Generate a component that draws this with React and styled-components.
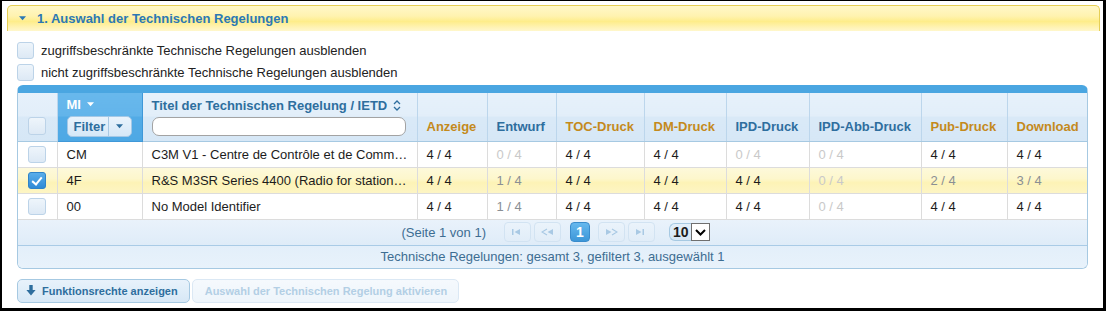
import React from "react"
import styled, { createGlobalStyle } from "styled-components"

const GlobalStyle = createGlobalStyle`
  html, body { margin: 0; padding: 0; background: #fff; }
  body { font-family: "Liberation Sans", Arial, sans-serif; font-size: 13px; color: #222; }
  * { box-sizing: border-box; }
`

const columns = [
    { key: 'cb', width: 39 },
    { key: 'mi', width: 85 },
    { key: 'title', width: 275 },
    { key: 'anzeige', label: 'Anzeige', tone: 'gold', width: 70 },
    { key: 'entwurf', label: 'Entwurf', tone: 'blue', width: 69 },
    { key: 'toc', label: 'TOC-Druck', tone: 'gold', width: 88 },
    { key: 'dm', label: 'DM-Druck', tone: 'gold', width: 82 },
    { key: 'ipd', label: 'IPD-Druck', tone: 'blue', width: 83 },
    { key: 'ipdabb', label: 'IPD-Abb-Druck', tone: 'blue', width: 112 },
    { key: 'pub', label: 'Pub-Druck', tone: 'gold', width: 86 },
    { key: 'download', label: 'Download', tone: 'gold', width: 80 },
]

// each value: [text, tone]  tone: n = normal, l = light grey, m = mid grey
const rows = [
    { mi: 'CM', title: 'C3M V1 - Centre de Contrôle et de Comm…', selected: false,
      values: [['4 / 4', 'n'], ['0 / 4', 'l'], ['4 / 4', 'n'], ['4 / 4', 'n'], ['0 / 4', 'l'], ['0 / 4', 'l'], ['4 / 4', 'n'], ['4 / 4', 'n']] },
    { mi: '4F', title: 'R&S M3SR Series 4400 (Radio for station…', selected: true,
      values: [['4 / 4', 'n'], ['1 / 4', 'm'], ['4 / 4', 'n'], ['4 / 4', 'n'], ['4 / 4', 'n'], ['0 / 4', 'l'], ['2 / 4', 'm'], ['3 / 4', 'm']] },
    { mi: '00', title: 'No Model Identifier', selected: false,
      values: [['4 / 4', 'n'], ['1 / 4', 'm'], ['4 / 4', 'n'], ['4 / 4', 'n'], ['4 / 4', 'n'], ['0 / 4', 'l'], ['4 / 4', 'n'], ['4 / 4', 'n']] },
]

const toneColor = { n: '#1c1c1c', l: '#c9c9c9', m: '#8a8f94' }

function Tri({ color = '#fff', size = 7 }) {
    return (
        <svg width={size} height={Math.ceil(size / 2) + 1} viewBox="0 0 8 5">
            <path d="M0 0 L8 0 L4 4.5 Z" fill={color} />
        </svg>
    )
}

function SortIcon() {
    return (
        <svg width="8" height="11" viewBox="0 0 8 11">
            <path d="M1 4 L4 1 L7 4 M1 7 L4 10 L7 7" fill="none" stroke="#2e6e9e" strokeWidth="1.3" />
        </svg>
    )
}

function PagerIcon({ kind }) {
    const c = '#a9c9e4'
    const shapes = {
        first: <><rect x="1" y="1" width="1.5" height="6" fill={c} /><path d="M9 1 L3.5 4 L9 7 Z" fill={c} /></>,
        prev: <><path d="M6 1 L1 4 L6 7" fill="none" stroke={c} strokeWidth="1.2" /><path d="M12 1 L6.5 4 L12 7 Z" fill={c} /></>,
        next: <><path d="M1 1 L6.5 4 L1 7 Z" fill={c} /><path d="M7 1 L12 4 L7 7" fill="none" stroke={c} strokeWidth="1.2" /></>,
        last: <><path d="M1 1 L6.5 4 L1 7 Z" fill={c} /><rect x="7.5" y="1" width="1.5" height="6" fill={c} /></>,
    }
    return <svg width="13" height="8" viewBox="0 0 13 8">{shapes[kind]}</svg>
}

export default function App() {
    return (
        <Frame>
            <GlobalStyle />
            <SectionHeader>
                <Tri color="#2b78b4" size={7} />
                <span>1. Auswahl der Technischen Regelungen</span>
            </SectionHeader>
            <Body>
                <Checks>
                    <CheckRow><Box /><span>zugriffsbeschränkte Technische Regelungen ausblenden</span></CheckRow>
                    <CheckRow><Box /><span>nicht zugriffsbeschränkte Technische Regelungen ausblenden</span></CheckRow>
                </Checks>

                <TableBox>
                    <Grid>
                        <colgroup>
                            {columns.map(c => <col key={c.key} style={{ width: c.width }} />)}
                        </colgroup>
                        <thead>
                            <tr>
                                <Head $align="center"><HeadBox><Box /></HeadBox></Head>
                                <Head $active>
                                    <MiTitle>MI <Tri color="#fff" size={7} /></MiTitle>
                                    <FilterButton>
                                        <span className="label">Filter</span>
                                        <span className="drop"><Tri color="#2e6e9e" size={7} /></span>
                                    </FilterButton>
                                </Head>
                                <Head>
                                    <TitleLabel>Titel der Technischen Regelung / IETD <SortIcon /></TitleLabel>
                                    <SearchInput type="text" />
                                </Head>
                                {columns.slice(3).map(c => (
                                    <Head key={c.key} $tone={c.tone}><span>{c.label}</span></Head>
                                ))}
                            </tr>
                        </thead>
                        <tbody>
                            {rows.map(r => (
                                <Row key={r.mi} $selected={r.selected}>
                                    <Cell $align="center"><Box $checked={r.selected} /></Cell>
                                    <Cell>{r.mi}</Cell>
                                    <Cell>{r.title}</Cell>
                                    {r.values.map(([v, t], i) => (
                                        <Cell key={i} $tone={t}>{v}</Cell>
                                    ))}
                                </Row>
                            ))}
                        </tbody>
                    </Grid>
                    <Pager>
                        <span className="info">(Seite 1 von 1)</span>
                        <PageButtons>
                            <PageBtn><PagerIcon kind="first" /></PageBtn>
                            <PageBtn><PagerIcon kind="prev" /></PageBtn>
                        </PageButtons>
                        <PageNumber>1</PageNumber>
                        <PageButtons>
                            <PageBtn><PagerIcon kind="next" /></PageBtn>
                            <PageBtn><PagerIcon kind="last" /></PageBtn>
                        </PageButtons>
                        <PageSize>
                            <span className="num">10</span>
                            <span className="arrow">
                                <svg width="11" height="7" viewBox="0 0 11 7">
                                    <path d="M1 1 L5.5 5.5 L10 1" fill="none" stroke="#000" strokeWidth="2" />
                                </svg>
                            </span>
                        </PageSize>
                    </Pager>
                    <Status>Technische Regelungen: gesamt 3, gefiltert 3, ausgewählt 1</Status>
                </TableBox>

                <Actions>
                    <ActionButton>
                        <svg width="10" height="11" viewBox="0 0 10 11">
                            <path d="M3.3 0 H6.7 V5 H9.6 L5 10.6 L0.4 5 H3.3 Z" fill="#2e6e9e" />
                        </svg>
                        Funktionsrechte anzeigen
                    </ActionButton>
                    <ActionButton $disabled>Auswahl der Technischen Regelung aktivieren</ActionButton>
                </Actions>
            </Body>
        </Frame>
    )
}

const Frame = styled.div`
    width: 1106px;
    height: 311px;
    border: solid #000;
    border-width: 1px 3px 3px 2px;
    padding: 4px 3px 0 5px;
    overflow: hidden;
`

const SectionHeader = styled.div`
    height: 26px;
    display: flex;
    align-items: center;
    gap: 11px;
    padding-left: 11px;
    border: 1px solid #e6cf55;
    border-bottom: none;
    border-radius: 5px 5px 0 0;
    background: linear-gradient(to bottom, #fff8c8 0%, #fff3b0 40%, #feed8a 62%, #fff3b4 85%, #fff7cc 100%);
    color: #2b78b4;
    font-weight: bold;
    font-size: 13px;
`

const Body = styled.div`
    padding: 10px 10px 0 10px;
`

const Checks = styled.div`
    display: flex;
    flex-direction: column;
    gap: 5px;
    padding-top: 1px;
`

const CheckRow = styled.label`
    display: flex;
    align-items: center;
    gap: 7px;
    height: 17px;
    color: #222;
    font-size: 13px;
`

const Box = styled.span`
    width: 17px;
    height: 17px;
    flex: none;
    display: inline-block;
    position: relative;
    border-radius: 3px;
    border: 1px solid ${p => p.$checked ? '#2f83c8' : '#bcd3e8'};
    background: ${p => p.$checked
        ? 'linear-gradient(to bottom, #5aaeea, #2f8ad6)'
        : 'linear-gradient(to bottom, #eef5fb, #dde9f5)'};
    vertical-align: middle;

    ${p => p.$checked ? `
    &::after{
        content: '';
        position: absolute;
        left: 5px;
        top: 2px;
        width: 4px;
        height: 8px;
        border: solid #fff;
        border-width: 0 2px 2px 0;
        transform: rotate(40deg);
    }
    ` : null}
`

const TableBox = styled.div`
    margin-top: 4px;
    width: 1071px;
    border: 1px solid #a6c9e2;
    border-top: 8px solid #4aa6e1;
    border-radius: 6px;
    overflow: hidden;
`

const Grid = styled.table`
    width: 1069px;
    table-layout: fixed;
    border-collapse: collapse;
`

const Head = styled.th`
    height: 48px;
    padding: 0 9px 7px;
    vertical-align: bottom;
    text-align: ${p => p.$align || 'left'};
    font-size: 13px;
    font-weight: bold;
    white-space: nowrap;
    border-right: 1px solid ${p => p.$active ? '#3f98d8' : '#bcd6ec'};
    border-bottom: 1px solid ${p => p.$active ? '#3f98d8' : '#a6c9e2'};
    color: ${p => p.$tone === 'gold' ? '#c48a1c' : '#2e6e9e'};
    background: ${p => p.$active
        ? 'linear-gradient(to bottom, #68b8ec 0%, #62b4ea 48%, #52abe6 50%, #4ea8e4 100%)'
        : 'linear-gradient(to bottom, #e6f1fb 0%, #e2eef9 48%, #d9e9f7 50%, #d6e7f6 100%)'};
    &:last-child{ border-right: none; }
`

const HeadBox = styled.div`
    display: flex;
    justify-content: center;
    margin-bottom: -1px;
    ${Box}{ width: 18px; height: 18px; }
`

const MiTitle = styled.div`
    display: flex;
    align-items: center;
    gap: 6px;
    color: #fff;
    margin-bottom: 4px;
`

const FilterButton = styled.div`
    display: inline-flex;
    width: 65px;
    height: 21px;
    margin-bottom: -3px;
    border: 1px solid #a4c8e6;
    border-radius: 5px;
    background: linear-gradient(to bottom, #e9f3fc, #d6e8f7);
    color: #2e6e9e;
    font-size: 13px;
    font-weight: bold;
    overflow: hidden;

    .label{
        flex: 1;
        display: flex;
        align-items: center;
        padding-left: 6px;
        border-right: 1px solid #a9c9e4;
    }
    .drop{
        width: 22px;
        display: flex;
        align-items: center;
        justify-content: center;
    }
`

const TitleLabel = styled.div`
    display: flex;
    align-items: center;
    gap: 6px;
    margin-bottom: 4px;
`

const SearchInput = styled.input`
    display: block;
    width: 254px;
    height: 19px;
    margin: 0 0 -2px;
    border: 1px solid #a3a3a3;
    border-radius: 7px;
    background: #fff;
    outline: none;
`

const Row = styled.tr`
    background: ${p => p.$selected
        ? 'linear-gradient(to bottom, #fdf9dc 0%, #fdf7cc 45%, #fdf3b6 60%, #fdf5c4 100%)'
        : '#fff'};
`

const Cell = styled.td`
    height: 26px;
    padding: 0 9px;
    text-align: ${p => p.$align || 'left'};
    vertical-align: middle;
    white-space: nowrap;
    overflow: hidden;
    color: ${p => toneColor[p.$tone || 'n']};
    font-size: 13px;
    border-right: 1px solid #dcdcdc;
    border-bottom: 1px solid #dcdcdc;
    &:last-child{ border-right: none; }

    ${Box}{ display: block; margin: 0 auto; width: 18px; }
`

const Pager = styled.div`
    height: 26px;
    display: flex;
    align-items: center;
    justify-content: center;
    padding-left: 6px;
    background: linear-gradient(to bottom, #e9f2fb, #dfecf8);
    border-bottom: 1px solid #a9cbe6;
    color: #3d6d92;
    font-size: 13px;

    .info{
        margin-right: 18px;
    }
`

const PageButtons = styled.div`
    display: flex;
    gap: 3px;
`

const PageBtn = styled.span`
    width: 27px;
    height: 20px;
    display: flex;
    align-items: center;
    justify-content: center;
    border: 1px solid #d2e3f2;
    border-radius: 4px;
    background: linear-gradient(to bottom, #eaf3fb, #e1edf8);
`

const PageNumber = styled.span`
    width: 20px;
    height: 20px;
    margin: 0 8px 0 9px;
    display: flex;
    align-items: center;
    justify-content: center;
    border: 1px solid #3a8ccc;
    border-radius: 4px;
    background: linear-gradient(to bottom, #66b8ee, #3d97d8);
    color: #fff;
    font-weight: bold;
    font-size: 14px;
`

const PageSize = styled.span`
    margin-left: 14px;
    height: 18px;
    display: flex;
    align-items: center;
    border: 1px solid #a6c9e2;
    border-radius: 6px 0 0 6px;
    border-right: none;
    background: linear-gradient(to bottom, #e3effa, #d5e6f5);

    .num{
        padding: 0 2px 0 3px;
        color: #1c1c1c;
        font-weight: bold;
        font-size: 14px;
    }
    .arrow{
        width: 19px;
        height: 18px;
        margin: -1px 0;
        display: flex;
        align-items: center;
        justify-content: center;
        background: #fff;
        border: 1px solid #6f6f6f;
    }
`

const Status = styled.div`
    height: 22px;
    display: flex;
    align-items: center;
    justify-content: center;
    background: linear-gradient(to bottom, #e3effa, #e8f2fb);
    color: #3d6d92;
    font-size: 13px;
`

const Actions = styled.div`
    margin-top: 10px;
    display: flex;
    gap: 2px;
`

const ActionButton = styled.button`
    height: 24px;
    display: flex;
    align-items: center;
    gap: 6px;
    padding: ${p => p.$disabled ? '0 11px 0 12px' : '0 11px 0 8px'};
    border-radius: 5px;
    font-family: "Liberation Sans", Arial, sans-serif;
    font-size: 11px;
    font-weight: bold;
    cursor: ${p => p.$disabled ? 'default' : 'pointer'};
    border: 1px solid ${p => p.$disabled ? '#dbe8f4' : '#a6c9e2'};
    color: ${p => p.$disabled ? '#b3cfe5' : '#2e6e9e'};
    background: ${p => p.$disabled
        ? 'linear-gradient(to bottom, #f5f9fd, #eef5fb)'
        : 'linear-gradient(to bottom, #e8f2fb, #d7e8f6)'};
`
